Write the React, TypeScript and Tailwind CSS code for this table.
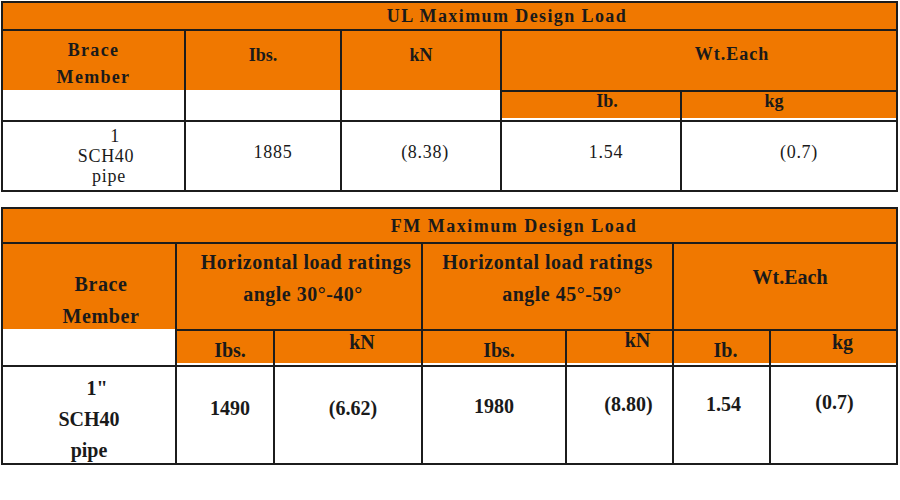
import React from 'react';

const App = () => {
  return (
    <div className="w-[900px] h-[500px] bg-white pt-[1px] pl-[1px] [font-family:Liberation_Serif,DejaVu_Serif,serif] text-[#1a1a1a]">
      {/* UL table */}
      <div className="grid w-[897px] grid-cols-[181px_154px_158px_178px_214px] grid-rows-[26px_59px_28px_68px] gap-[2px] bg-[#1c1c1c] p-[2px]">
        <div className="col-span-5 flex items-center justify-center bg-[#f07800] pl-[115px] text-[18px] font-bold leading-none tracking-[1.4px]">
          UL Maximum Design Load
        </div>

        <div className="row-span-2 flex flex-col bg-white">
          <div className="h-[59px] bg-[#f07800] pt-[6px] text-center text-[18px] font-bold leading-[27px] tracking-[1.3px]">
            Brace
            <br />
            Member
          </div>
        </div>
        <div className="row-span-2 flex flex-col bg-white">
          <div className="h-[59px] bg-[#f07800] pt-[14px] text-center text-[18px] font-bold leading-[20px]">Ibs.</div>
        </div>
        <div className="row-span-2 flex flex-col bg-white">
          <div className="h-[59px] bg-[#f07800] pt-[14px] text-center text-[18px] font-bold leading-[20px]">kN</div>
        </div>
        <div className="col-span-2 bg-[#f07800] pt-[13px] pl-[66px] text-center text-[18px] font-bold leading-[20px] tracking-[1px]">
          Wt.Each
        </div>

        <div className="border-b-2 border-white bg-[#f07800] pl-[32px] text-center text-[18px] font-bold leading-[18px]">Ib.</div>
        <div className="border-b-2 border-white bg-[#f07800] pr-[30px] text-center text-[18px] font-bold leading-[18px]">kg</div>

        {/* data */}
        <div className="bg-white pt-[4px] text-center text-[18px] leading-[20px] tracking-[0.7px]">
          <div className="pl-[43px]">1</div>
          <div className="pl-[25px]">SCH40</div>
          <div className="pl-[31px]">pipe</div>
        </div>
        <div className="bg-white pt-[20px] pl-[20px] text-center text-[18px] leading-[20px] tracking-[0.7px]">1885</div>
        <div className="bg-white pt-[20px] pl-[8px] text-center text-[18px] leading-[20px] tracking-[0.7px]">(8.38)</div>
        <div className="bg-white pt-[20px] pl-[30px] text-center text-[18px] leading-[20px] tracking-[0.7px]">1.54</div>
        <div className="bg-white pt-[20px] pl-[20px] text-center text-[18px] leading-[20px] tracking-[0.7px]">(0.7)</div>
      </div>

      {/* FM table */}
      <div className="mt-[15px] grid w-[897px] grid-cols-[172px_96px_146px_142px_105px_95px_125px] grid-rows-[33px_85px_34px_96px] gap-[2px] bg-[#1c1c1c] p-[2px]">
        <div className="col-span-7 flex items-center justify-center bg-[#f07800] pl-[129px] text-[18px] font-bold leading-none tracking-[1.5px]">
          FM Maximum Design Load
        </div>

        <div className="row-span-2 flex flex-col bg-white">
          <div className="h-[85px] bg-[#f07800] pt-[24px] pl-[24px] text-center text-[20px] font-bold leading-[32px] tracking-[0.6px]">
            Brace
            <br />
            Member
          </div>
        </div>
        <div className="col-span-2 bg-[#f07800] pt-[2px] text-center text-[20px] font-bold leading-[32px] tracking-[0.5px]">
          <div className="pl-[14px]">Horizontal load ratings</div>
          <div className="pl-[8px]">angle 30°-40°</div>
        </div>
        <div className="col-span-2 bg-[#f07800] pt-[2px] text-center text-[20px] font-bold leading-[32px] tracking-[0.5px]">
          <div>Horizontal load ratings</div>
          <div className="pl-[29px]">angle 45°-59°</div>
        </div>
        <div className="col-span-2 bg-[#f07800] pt-[17px] pl-[10px] text-center text-[20px] font-bold leading-[32px]">
          Wt.Each
        </div>

        <div className="border-b-2 border-white bg-[#f07800] pt-[7px] pl-[10px] text-center text-[20px] font-bold leading-[24px]">Ibs.</div>
        <div className="border-b-2 border-white bg-[#f07800] pl-[28px] text-center text-[20px] font-bold leading-[22px]">kN</div>
        <div className="border-b-2 border-white bg-[#f07800] pt-[7px] pl-[10px] text-center text-[20px] font-bold leading-[24px]">Ibs.</div>
        <div className="border-b-2 border-white bg-[#f07800] pl-[36px] text-center text-[20px] font-bold leading-[18px]">kN</div>
        <div className="border-b-2 border-white bg-[#f07800] pt-[7px] pl-[8px] text-center text-[20px] font-bold leading-[24px]">Ib.</div>
        <div className="border-b-2 border-white bg-[#f07800] pl-[18px] text-center text-[20px] font-bold leading-[22px]">kg</div>

        {/* data */}
        <div className="bg-white pt-[6px] text-center text-[20px] font-bold leading-[31px]">
          <div className="pl-[16px]">1"</div>
          <div>SCH40</div>
          <div>pipe</div>
        </div>
        <div className="bg-white pt-[26px] pl-[10px] text-center text-[20px] font-bold leading-[31px]">1490</div>
        <div className="bg-white pt-[26px] pl-[10px] text-center text-[20px] font-bold leading-[31px]">(6.62)</div>
        <div className="bg-white pt-[24px] text-center text-[20px] font-bold leading-[31px]">1980</div>
        <div className="bg-white pt-[22px] pl-[18px] text-center text-[20px] font-bold leading-[31px]">(8.80)</div>
        <div className="bg-white pt-[22px] pl-[4px] text-center text-[20px] font-bold leading-[31px]">1.54</div>
        <div className="bg-white pt-[20px] pl-[2px] text-center text-[20px] font-bold leading-[31px]">(0.7)</div>
      </div>
    </div>
  );
};

export default App;
